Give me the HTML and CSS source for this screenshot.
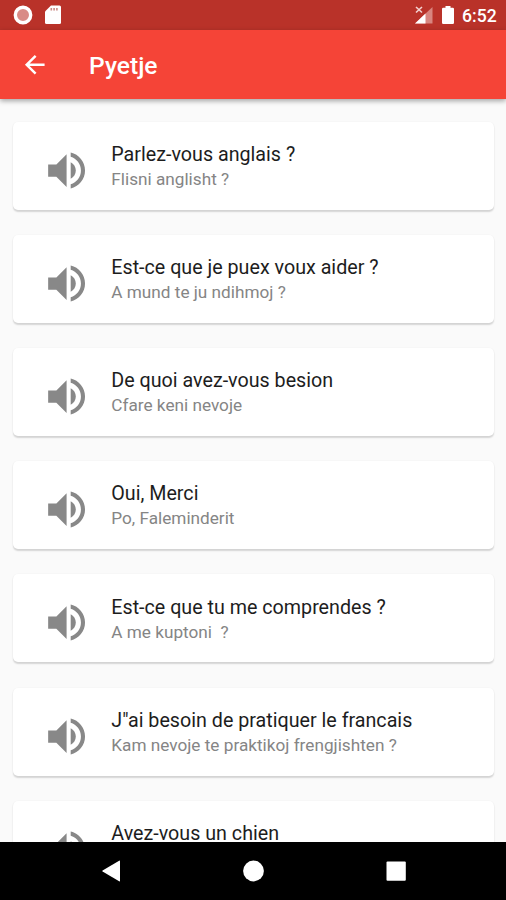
FILE: index.html
```html
<!DOCTYPE html>
<html lang="sq">
<head>
<meta charset="utf-8">
<title>Pyetje</title>
<link rel="stylesheet" href="styles.css">
</head>
<body>
<svg width="0" height="0" class="defs"><symbol id="volume" viewBox="0 0 24 24"><path d="M3 9v6h4l5 5V4L7 9H3zm13.500 3c0-1.770-1.020-3.290-2.500-4.030v8.050c1.480-.730 2.500-2.250 2.500-4.020zM14 3.230v2.060c2.890.860 5 3.540 5 6.710s-2.110 5.850-5 6.710v2.060c4.010-.910 7-4.490 7-8.770s-2.990-7.860-7-8.770z"/></symbol></svg>
<div class="screen">
  <div class="status">
    <svg class="record" viewBox="0 0 20 20"><circle cx="10" cy="10" r="7.700" fill="#d98b86" stroke="#fff" stroke-width="3.400"/></svg>
    <svg class="sd" viewBox="0 0 16 20"><path fill="#fff" d="M6 .500h8.500a1.500 1.500 0 0 1 1.500 1.500v15.500a1.500 1.500 0 0 1-1.500 1.500h-13A1.500 1.500 0 0 1 0 17.500V6.500z"/><path fill="#c98a85" d="M5.500 3h1.600v2.500H5.500zM8.300 3h1.600v2.500H8.300zM11.100 3h1.600v2.500h-1.600z"/></svg>
    <span class="spacer"></span>
    <svg class="signal" viewBox="0 0 18 18"><path fill="#d8857f" d="M17.500 1v16.500H0z"/><path fill="#fff" d="M10.500 7.500v10H0z"/><path d="M.500.800l6.500 6M7 .800l-6.500 6" stroke="#b93229" stroke-width="4"/><path d="M1 1l6 5.500M7 1L1 6.500" stroke="#f3d2d0" stroke-width="1.600"/></svg>
    <svg class="battery" viewBox="0 0 12 18"><path fill="#fff" d="M3.500 0h5v1.800h2.300A1.200 1.200 0 0 1 12 3v13.800a1.200 1.200 0 0 1-1.200 1.200H1.200A1.200 1.200 0 0 1 0 16.800V3a1.200 1.200 0 0 1 1.200-1.200h2.300z"/></svg>
    <span class="time">6:52</span>
  </div>
  <header class="appbar">
    <svg class="back" viewBox="0 0 24 24"><path fill="#fff" d="M20 11H7.830l5.590-5.590L12 4l-8 8 8 8 1.410-1.410L7.830 13H20v-2z"/></svg>
    <h1 class="heading">Pyetje</h1>
  </header>
  <main class="list">
    <div class="card"><svg class="volume"><use href="#volume"/></svg><div class="text"><div class="title">Parlez-vous anglais ?</div><div class="subtitle">Flisni anglisht ?</div></div></div>
    <div class="card"><svg class="volume"><use href="#volume"/></svg><div class="text"><div class="title">Est-ce que je puex voux aider ?</div><div class="subtitle">A mund te ju ndihmoj ?</div></div></div>
    <div class="card"><svg class="volume"><use href="#volume"/></svg><div class="text"><div class="title">De quoi avez-vous besion</div><div class="subtitle">Cfare keni nevoje</div></div></div>
    <div class="card"><svg class="volume"><use href="#volume"/></svg><div class="text"><div class="title">Oui, Merci</div><div class="subtitle">Po, Faleminderit</div></div></div>
    <div class="card"><svg class="volume"><use href="#volume"/></svg><div class="text"><div class="title">Est-ce que tu me comprendes ?</div><div class="subtitle">A me kuptoni&nbsp; ?</div></div></div>
    <div class="card"><svg class="volume"><use href="#volume"/></svg><div class="text"><div class="title">J"ai besoin de pratiquer le francais</div><div class="subtitle">Kam nevoje te praktikoj frengjishten ?</div></div></div>
    <div class="card"><svg class="volume"><use href="#volume"/></svg><div class="text"><div class="title">Avez-vous un chien</div></div></div>
  </main>
  <nav class="navbar">
    <svg viewBox="0 0 22 22"><path fill="#fff" d="M20 1.200v19.600a.6.600 0 0 1-.9.500L2.600 11.500a.6.600 0 0 1 0-1L19.100.700a.6.600 0 0 1 .9.500z"/></svg>
    <svg viewBox="0 0 22 22"><circle cx="11.500" cy="11" r="10.400" fill="#fff"/></svg>
    <svg viewBox="0 0 22 22"><rect x="1.500" y="1.500" width="19.300" height="19.300" rx="1" fill="#fff"/></svg>
  </nav>
</div>
</body>
</html>
```
FILE: styles.css
```css
* { box-sizing: border-box; }
body { margin: 0; font-family: Roboto, sans-serif; background: #fafafa; }
.defs { display: none; }
.screen { width: 506px; height: 900px; display: flex; flex-direction: column; overflow: hidden; }
.status { height: 30px; flex: none; display: flex; align-items: center; background: #b93229; padding: 0 9px 0 12.5px; }
.record { width: 20px; height: 20px; }
.sd { width: 16px; height: 20px; margin-left: 12px; }
.spacer { flex: 1; }
.signal { width: 18px; height: 18px; }
.battery { width: 12px; height: 18px; margin-left: 9px; }
.time { width: 35px; margin-left: 8px; color: #fff; font-size: 17.6px; font-weight: 500; line-height: 30px; padding-top: 2px; white-space: nowrap; }
.appbar { height: 69px; flex: none; display: flex; align-items: center; background: #f54437; box-shadow: 0 2px 5px rgba(0, 0, 0, .35); padding-left: 20px; z-index: 1; }
.back { width: 29.5px; height: 29.5px; }
.heading { margin: 2px 0 0 39.5px; color: #fff; font-size: 24.6px; font-weight: 500; line-height: 30px; }
.list { flex: 1; min-height: 0; overflow: hidden; display: flex; flex-direction: column; gap: 25.2px; padding: 22.6px 12px 0 13px; }
.card { height: 88px; flex: none; display: flex; background: #fff; border-radius: 5px; box-shadow: 0 1.2px 1.5px rgba(0, 0, 0, .15), 0 0 2px rgba(0, 0, 0, .03); padding-left: 29px; }
.volume { width: 49.2px; height: 49.2px; margin-top: 24px; fill: #888; flex: none; }
.text { margin: 20.2px 0 0 20.1px; white-space: nowrap; }
.title { color: #1d1d1d; font-size: 19.7px; line-height: 25px; }
.subtitle { color: #858585; font-size: 17.2px; line-height: 25px; }
.navbar { height: 58px; flex: none; display: flex; background: #000; justify-content: center; gap: 120.5px; padding-top: 18px; z-index: 1; }
.navbar svg { width: 22px; height: 22px; }
```
